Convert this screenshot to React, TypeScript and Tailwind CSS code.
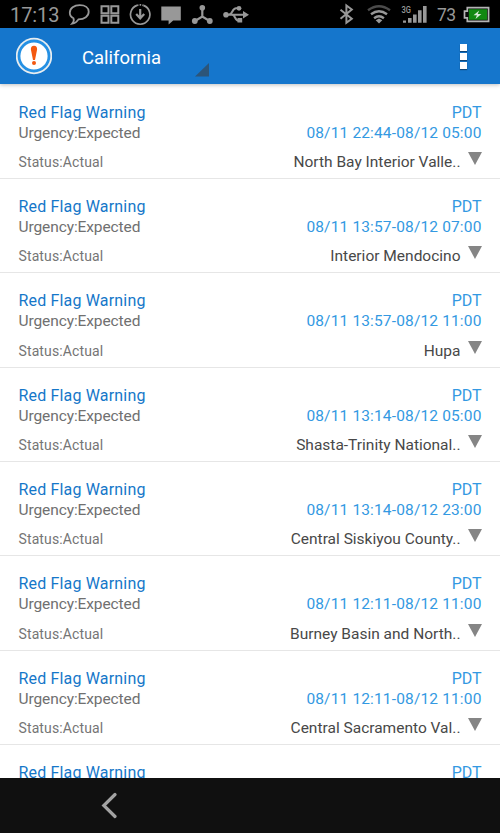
import React from 'react';

interface Alert {
  period?: string;
  area?: string;
}

const ALERTS: Alert[] = [
  { period: '08/11 22:44-08/12 05:00', area: 'North Bay Interior Valle..' },
  { period: '08/11 13:57-08/12 07:00', area: 'Interior Mendocino' },
  { period: '08/11 13:57-08/12 11:00', area: 'Hupa' },
  { period: '08/11 13:14-08/12 05:00', area: 'Shasta-Trinity National..' },
  { period: '08/11 13:14-08/12 23:00', area: 'Central Siskiyou County..' },
  { period: '08/11 12:11-08/12 11:00', area: 'Burney Basin and North..' },
  { period: '08/11 12:11-08/12 11:00', area: 'Central Sacramento Val..' },
  {},
];

const StatusBar: React.FC = () => (
  <header className="flex h-7 shrink-0 items-center bg-black pl-[10px] pr-[10px] text-[#989898]">
    <span className="w-[58px] pt-[1px] text-[20px] leading-7 tracking-[-0.1px]">17:13</span>

    {/* chat */}
    <svg className="h-7 w-6 shrink-0" viewBox="0 0 24 28" fill="none" stroke="currentColor" strokeWidth="1.8">
      <path d="M5.5 18.3C2.8 17 1.8 15 1.8 12.8C1.8 8.2 6 5.2 11.8 5.2C17.2 5.2 20.7 7.9 20.7 11.8C20.7 16.2 16.5 19.2 10.5 19.4C9.2 21.5 7.3 23.3 4.2 23.7C5.6 22.2 6.2 20.2 5.5 18.3Z" />
    </svg>

    {/* grid */}
    <svg className="ml-2 h-7 w-5 shrink-0" viewBox="0 0 20 28" fill="none" stroke="currentColor" strokeWidth="2">
      <path d="M1.5 6.3h7v7h-7zM11.3 6.3h7v7h-7zM1.5 15.7h7v7h-7zM11.3 15.7h7v7h-7z" />
    </svg>

    {/* download */}
    <svg className="ml-[9px] h-7 w-6 shrink-0" viewBox="0 0 24 28" fill="none" stroke="currentColor">
      <path d="M8 5.4A9.7 9.7 0 1 0 14.4 5.4" strokeWidth="1.7" />
      <path d="M8 5.4A9.7 9.7 0 0 1 14.4 5.4" strokeWidth="1.7" strokeDasharray="1.5 1.2" />
      <path d="M11.2 9v9M7.2 14l4 4.3l4-4.3" strokeWidth="2.2" />
    </svg>

    {/* message */}
    <svg className="ml-[7px] h-7 w-[22px] shrink-0" viewBox="0 0 22 28" fill="currentColor">
      <path d="M1.3 6.5h19.5v14h-7.6l-4.6 4v-4H1.3z" />
    </svg>

    {/* share nodes */}
    <svg className="ml-[9px] h-7 w-6 shrink-0" viewBox="0 0 24 28" fill="currentColor">
      <path d="M11.3 8v8.6M4 21l7.3-4.4l7.3 4.4" fill="none" stroke="currentColor" strokeWidth="2.2" />
      <circle cx="11.3" cy="7.7" r="2.8" />
      <circle cx="3.8" cy="21" r="2.9" />
      <circle cx="18.8" cy="21" r="2.9" />
    </svg>

    {/* usb */}
    <svg className="ml-[7px] h-7 w-7 shrink-0" viewBox="0 0 28 28" fill="currentColor">
      <path d="M4 14.7h18M7 14.5c3.5 0 3.2-6.3 7-6.3h2M10 14.8c3.5 0 2.8 5.8 6.3 5.8h2.5" fill="none" stroke="currentColor" strokeWidth="2" />
      <circle cx="4" cy="14.7" r="2.8" />
      <circle cx="17" cy="8.3" r="2.4" />
      <path d="M15.5 18h4.7v4.5h-4.7zM21 11l6 3.7l-6 3.7z" />
    </svg>

    <div className="flex-1" />

    {/* bluetooth */}
    <svg className="h-7 w-4 shrink-0" viewBox="0 0 16 28" fill="none" stroke="currentColor" strokeWidth="2">
      <path d="M1.5 9.7l11.3 9l-5.4 4V5.5l5.4 4l-11.3 9.2" />
    </svg>

    {/* wifi */}
    <svg className="ml-[11px] h-7 w-[26px] shrink-0" viewBox="0 0 26 28" fill="none" stroke="currentColor" strokeWidth="2.4">
      <path d="M2 10.2q11-8 22 0" stroke="#4b4b4b" />
      <path d="M5 14.3q8-6 16 0" />
      <path d="M8.1 18.2q4.9-3.8 9.8 0" />
      <path d="M13 18.6l-3.3 1.6l3.3 3.2l3.3-3.2z" fill="currentColor" stroke="none" />
    </svg>

    {/* signal */}
    <svg className="ml-[9px] h-7 w-[27px] shrink-0" viewBox="0 0 27 28" fill="currentColor">
      <text x="0.5" y="13" fontSize="9" fontWeight="500" textLength="9.5" lengthAdjust="spacingAndGlyphs">3G</text>
      <path d="M2 20.5h3v2.3H2zM7 18h3.6v4.8H7zM12 14.5h3.6v8.3H12zM17 10.3h3.6v12.5H17zM22 6h3.6v16.8H22z" />
    </svg>

    <span className="ml-[9px] w-[21px] pt-[2px] text-[17.5px] leading-7 tracking-[-0.5px]">73</span>

    {/* battery */}
    <svg className="ml-[5px] h-7 w-[27px] shrink-0" viewBox="0 0 27 28">
      <path d="M4.3 7.7h21.3v13.6H4.3v-3.4H1.5v-6.8h2.8z" fill="#0b0b0b" stroke="#b4b4b4" strokeWidth="1.7" />
      <path d="M5.8 9.2h18.3v10.6H5.8z" fill="#118911" />
      <path d="M16.2 10.4l-5.7 4.8h3.4l-1.4 3.8l5.9-5h-3.7z" fill="#d5e8d5" />
    </svg>
  </header>
);

const ActionBar: React.FC = () => (
  <div className="z-10 flex h-14 shrink-0 items-center bg-[#1576cc] pl-4 pr-8 shadow-[0_1px_4px_rgba(0,0,0,0.25)]">
    <svg className="h-[38px] w-9 shrink-0" viewBox="0 0 36 38">
      <circle cx="18" cy="19" r="18.2" fill="#e8edf0" />
      <circle cx="18" cy="19" r="15" fill="#fff" stroke="#2490e4" strokeWidth="2.8" />
      <path d="M18 8.8c2.2 0 3.3 1.6 3.1 3.6l-2.1 10.6h-2l-2.1-10.6c-.2-2 .9-3.6 3.1-3.6z" fill="#f4580f" />
      <circle cx="18" cy="26" r="2" fill="#f4580f" />
    </svg>
    <div className="ml-[30px] flex h-full w-[127px] items-end justify-between pb-[7px]">
      <span className="self-center pt-[11px] text-[18.5px] leading-6 text-white">California</span>
      <svg className="h-[14px] w-[14px] shrink-0" viewBox="0 0 14 14">
        <path d="M14 0v13.5H0z" fill="#2c5579" />
      </svg>
    </div>
    <div className="ml-auto mr-[1px] flex flex-col gap-[2px]">
      <i className="h-[7px] w-[7px] bg-white shadow-[0_1px_1px_rgba(0,0,0,0.4)]" />
      <i className="h-[7px] w-[7px] bg-white shadow-[0_1px_1px_rgba(0,0,0,0.4)]" />
      <i className="h-[7px] w-[7px] bg-white shadow-[0_1px_1px_rgba(0,0,0,0.4)]" />
    </div>
  </div>
);

const AlertRow: React.FC<Alert> = ({ period, area }) => (
  <li className="flex h-[94.36px] shrink-0 flex-col border-b border-[#e6e6e6] px-[18.5px] pt-[17px]">
    <div className="flex justify-between text-[16px] leading-[21px]">
      <span className="tracking-[0.17px] text-[#1577c9]">Red Flag Warning</span>
      <span className="tracking-[-0.1px] text-[#3399e2]">PDT</span>
    </div>
    {period && (
      <div className="flex justify-between leading-[21px]">
        <span className="text-[15.5px] tracking-[-0.1px] text-[#707070]">Urgency:Expected</span>
        <span className="text-[15.5px] tracking-[0.15px] text-[#3399e2]">{period}</span>
      </div>
    )}
    {area && (
      <div className="mt-[8px] flex h-[22px] items-center">
        <span className="text-[14px] tracking-[0.12px] text-[#757575]">Status:Actual</span>
        <span className="ml-auto text-[15.5px] text-[#484848]">{area}</span>
        <svg className="mb-[8px] ml-[7px] h-[13px] w-[14px]" viewBox="0 0 14 13">
          <path d="M0 0h14L7 13z" fill="#858585" />
        </svg>
      </div>
    )}
  </li>
);

export default function App() {
  return (
    <div className="flex h-[833px] w-[500px] flex-col overflow-hidden bg-white font-['Roboto','Liberation_Sans',sans-serif]">
      <StatusBar />
      <ActionBar />
      <ul className="flex min-h-0 flex-1 flex-col overflow-hidden pt-[0.5px]">
        {ALERTS.map((alert, i) => (
          <AlertRow key={i} {...alert} />
        ))}
      </ul>
      <nav className="flex h-[55px] shrink-0 items-center bg-[#101010] pl-[101px]">
        <svg className="h-7 w-4" viewBox="0 0 16 28" fill="none" stroke="#a3a3a3" strokeWidth="3.2" strokeLinecap="round">
          <path d="M14 2.5L2.8 13.5L14 24.5" />
        </svg>
      </nav>
    </div>
  );
}
